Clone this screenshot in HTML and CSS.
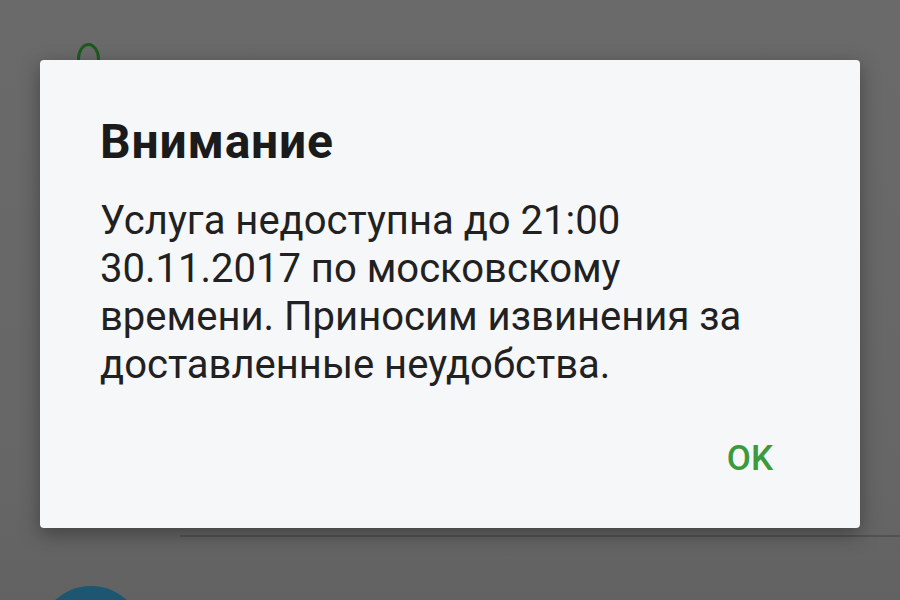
FILE: index.html
```html
<!DOCTYPE html>
<html lang="ru">
<head>
<meta charset="utf-8">
<link rel="stylesheet" href="styles.css">
</head>
<body>
<div class="screen">
  <div class="bg-ring"></div>
  <div class="bg-divider"></div>
  <div class="bg-avatar"></div>
  <div class="dialog">
    <h1 class="title">Внимание</h1>
    <p class="message">Услуга недоступна до 21:00<br>30.11.2017 по московскому<br>времени. Приносим извинения за<br>доставленные неудобства.</p>
    <div class="actions">
      <span class="btn-ok">OK</span>
    </div>
  </div>
</div>
</body>
</html>
```
FILE: styles.css
```css
html, body {
  margin: 0;
  padding: 0;
}
body {
  width: 900px;
  height: 600px;
  overflow: hidden;
  font-family: Roboto, "Noto Sans", sans-serif;
}
.screen {
  position: relative;
  width: 900px;
  height: 600px;
  overflow: hidden;
  background: linear-gradient(#6a6a6a 0%, #666666 80%, #626262 100%);
  padding: 60px 40px 0;
  box-sizing: border-box;
}
.bg-ring {
  position: absolute;
  left: 77px;
  top: 43px;
  width: 17px;
  height: 26px;
  border: 3px solid #1c5a1e;
  border-radius: 50%;
}
.bg-divider {
  position: absolute;
  left: 180px;
  top: 535px;
  width: 720px;
  height: 2px;
  background: #525252;
}
.bg-avatar {
  position: absolute;
  left: 38px;
  top: 586px;
  width: 106px;
  height: 106px;
  border-radius: 50%;
  background: #1c5670;
}
.dialog {
  position: relative;
  height: 468px;
  background: #f6f7f9;
  border-radius: 4px;
  box-shadow: 0 6px 20px rgba(0, 0, 0, 0.35);
  padding: 0 87px 0 60px;
  box-sizing: border-box;
  display: flex;
  flex-direction: column;
}
.title {
  margin: 53px 0 0;
  font-size: 48px;
  font-weight: 700;
  line-height: 57px;
  color: #1b1b1b;
  letter-spacing: 0.8px;
}
.message {
  margin: 27px 0 0;
  font-size: 40px;
  line-height: 48px;
  color: #212121;
}
.actions {
  display: flex;
  justify-content: flex-end;
  margin-top: 50px;
}
.btn-ok {
  font-size: 35px;
  font-weight: 500;
  line-height: 40px;
  color: #3b9a3b;
}
```
